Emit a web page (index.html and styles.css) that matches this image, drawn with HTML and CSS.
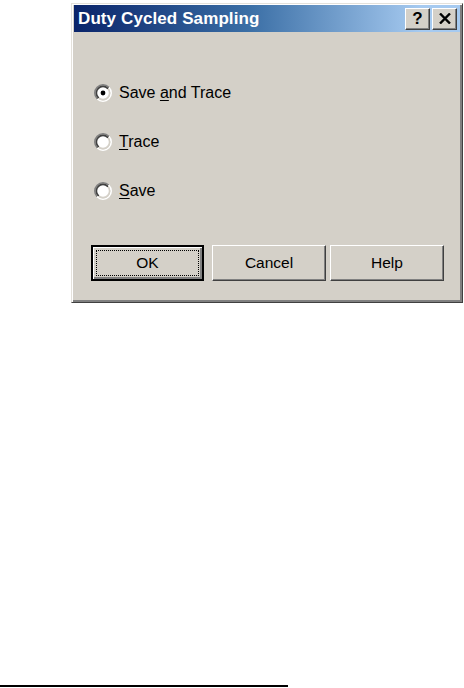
FILE: index.html
```html
<!DOCTYPE html>
<html>
<head>
<meta charset="utf-8">
<link rel="stylesheet" href="styles.css">
</head>
<body>
<div class="dialog">
  <div class="titlebar">
    <span class="title">Duty Cycled Sampling</span>
    <div class="tbtns">
      <div class="tbtn">?</div>
      <div class="tbtn">
        <svg width="12" height="11" viewBox="0 0 12 11"><path d="M1 0.5 L11 10.5 M11 0.5 L1 10.5" stroke="#000" stroke-width="2.4"/></svg>
      </div>
    </div>
  </div>
  <div class="options">
    <label class="opt">
      <svg class="radio" width="18" height="18" viewBox="0 0 18 18">
        <defs>
          <linearGradient id="go" x1="0" y1="0" x2="1" y2="1"><stop offset="0.5" stop-color="#808080"/><stop offset="0.5" stop-color="#ffffff"/></linearGradient>
          <linearGradient id="gi" x1="0" y1="0" x2="1" y2="1"><stop offset="0.5" stop-color="#404040"/><stop offset="0.5" stop-color="#d4d0c8"/></linearGradient>
        </defs>
        <circle cx="9" cy="9" r="8.2" fill="none" stroke="url(#go)" stroke-width="1.6"/>
        <circle cx="9" cy="9" r="6.6" fill="#fff" stroke="url(#gi)" stroke-width="1.6"/>
        <circle cx="9" cy="9" r="2.4" fill="#000"/>
      </svg>
      <span>Save <u>a</u>nd Trace</span>
    </label>
    <label class="opt">
      <svg class="radio" width="18" height="18" viewBox="0 0 18 18">
        <circle cx="9" cy="9" r="8.2" fill="none" stroke="url(#go)" stroke-width="1.6"/>
        <circle cx="9" cy="9" r="6.6" fill="#fff" stroke="url(#gi)" stroke-width="1.6"/>
      </svg>
      <span><u>T</u>race</span>
    </label>
    <label class="opt">
      <svg class="radio" width="18" height="18" viewBox="0 0 18 18">
        <circle cx="9" cy="9" r="8.2" fill="none" stroke="url(#go)" stroke-width="1.6"/>
        <circle cx="9" cy="9" r="6.6" fill="#fff" stroke="url(#gi)" stroke-width="1.6"/>
      </svg>
      <span><u>S</u>ave</span>
    </label>
  </div>
  <div class="buttons">
    <div class="btn default"><span class="focus">OK</span></div>
    <div class="btn btn-cancel">Cancel</div>
    <div class="btn">Help</div>
  </div>
</div>
<div class="rule"></div>
</body>
</html>
```
FILE: styles.css
```css
html, body {
  margin: 0;
  padding: 0;
  background: #fff;
}
body {
  width: 464px;
  height: 688px;
  display: flex;
  flex-direction: column;
  font-family: "Liberation Sans", Arial, sans-serif;
}
.dialog {
  margin: 3px 0 0 71px;
  width: 392px;
  height: 300px;
  box-sizing: border-box;
  background: #d4d0c8;
  border: 1px solid;
  border-color: #e4e1db #404040 #404040 #e4e1db;
  box-shadow: inset 1px 1px 0 #fff, inset -2px -2px 0 #808080;
  padding: 1px 2px 2px 2px;
  display: flex;
  flex-direction: column;
}
.titlebar {
  height: 27px;
  display: flex;
  align-items: center;
  justify-content: space-between;
  background: linear-gradient(to right, #0a246a 0%, #3a6ea5 45%, #a6caf0 90%, #a6caf0 100%);
  padding: 0 3px 0 4px;
}
.title {
  color: #fff;
  font-weight: bold;
  font-size: 17px;
  letter-spacing: 0.1px;
}
.tbtns {
  display: flex;
  gap: 2px;
}
.tbtn {
  width: 25px;
  height: 22px;
  box-sizing: border-box;
  background: #d4d0c8;
  border: 1px solid;
  border-color: #fff #404040 #404040 #fff;
  box-shadow: inset -1px -1px 0 #808080;
  display: flex;
  align-items: center;
  justify-content: center;
  font-weight: bold;
  font-size: 17px;
  color: #000;
}
.options {
  display: flex;
  flex-direction: column;
  gap: 29px;
  padding: 51px 0 0 20px;
}
.opt {
  display: flex;
  align-items: center;
  height: 20px;
  gap: 7px;
  font-size: 16px;
  color: #000;
}
.opt u {
  text-decoration-thickness: 1px;
  text-underline-offset: 2px;
}
.radio {
  flex: none;
}
.buttons {
  display: flex;
  margin-top: 44px;
  padding-left: 17px;
}
.btn {
  width: 114px;
  height: 36px;
  box-sizing: border-box;
  border: 1px solid;
  border-color: #fff #404040 #404040 #fff;
  box-shadow: inset -1px -1px 0 #808080;
  display: flex;
  align-items: center;
  justify-content: center;
  font-size: 15.5px;
  color: #000;
  background: #d4d0c8;
}
.btn.default {
  width: 113px;
  border: 2px solid #000;
  box-shadow: inset 1px 1px 0 #fff, inset -2px -2px 0 #808080;
  padding: 3px;
}
.btn-cancel {
  margin: 0 4px 0 8px;
}
.focus {
  flex: 1;
  align-self: stretch;
  border: 1px dotted #000;
  display: flex;
  align-items: center;
  justify-content: center;
}
.rule {
  margin-top: auto;
  margin-bottom: 1px;
  width: 288px;
  height: 2px;
  background: #000;
}
```
